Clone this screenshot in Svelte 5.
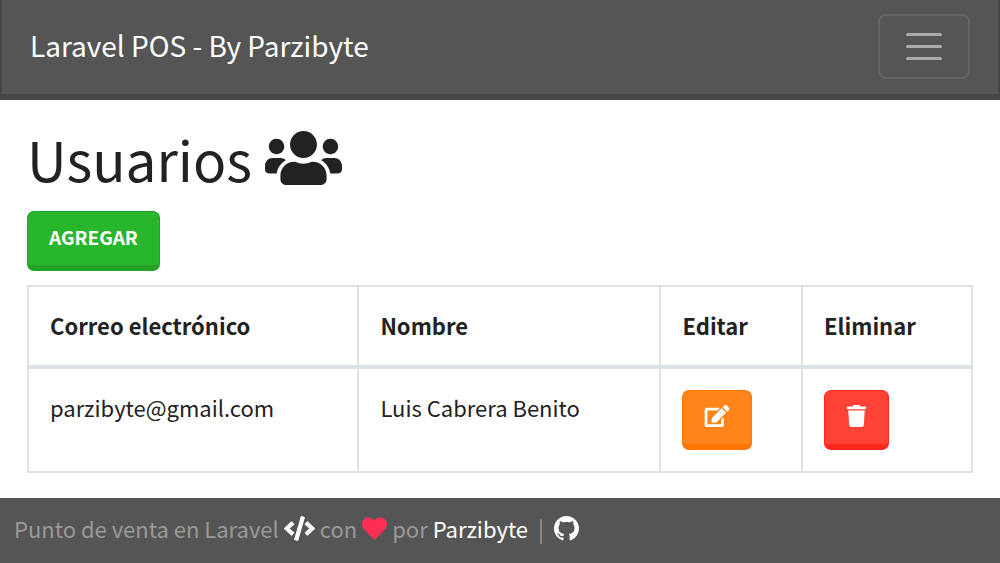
<script>
  let menuOpen = $state(false);

  const users = [
    { email: 'parzibyte@gmail.com', name: 'Luis Cabrera Benito' },
  ];
</script>

<svelte:head>
  <title>Usuarios</title>
</svelte:head>

<div class="page">
  <nav class="navbar">
    <a class="brand" href="#home">Laravel POS - By Parzibyte</a>
    <button
      class="toggler"
      type="button"
      aria-label="Mostrar u ocultar menú"
      aria-expanded={menuOpen}
      onclick={() => (menuOpen = !menuOpen)}
    >
      <svg viewBox="0 0 30 30" aria-hidden="true">
        <path stroke="currentColor" stroke-width="2" stroke-linecap="round" stroke-miterlimit="10" d="M4 7h22M4 15h22M4 23h22" />
      </svg>
    </button>
  </nav>

  <main>
    <h1>
      Usuarios
      <svg class="icon-users" viewBox="0 0 640 512" aria-hidden="true">
        <path d="M96 224c35.3 0 64-28.7 64-64s-28.7-64-64-64-64 28.7-64 64 28.7 64 64 64zm448 0c35.3 0 64-28.7 64-64s-28.7-64-64-64-64 28.7-64 64 28.7 64 64 64zm32 32h-64c-17.6 0-33.5 7.1-45.1 18.6 40.3 22.1 68.9 62 75.1 109.4h66c17.7 0 32-14.3 32-32v-32c0-35.3-28.7-64-64-64zm-256 0c61.9 0 112-50.1 112-112S381.9 32 320 32 208 82.1 208 144s50.1 112 112 112zm76.8 32h-8.3c-20.8 10-43.9 16-68.5 16s-47.6-6-68.5-16h-8.3C179.6 288 128 339.6 128 403.2V432c0 26.5 21.5 48 48 48h288c26.5 0 48-21.5 48-48v-28.8c0-63.6-51.6-115.2-115.2-115.2zm-223.7-13.4C161.5 263.1 145.6 256 128 256H64c-35.3 0-64 28.7-64 64v32c0 17.7 14.3 32 32 32h65.9c6.3-47.4 34.9-87.3 75.2-109.4z" />
      </svg>
    </h1>
    <a class="btn success" href="#agregar">Agregar</a>

    <table>
      <thead>
        <tr>
          <th class="email">Correo electrónico</th>
          <th class="name">Nombre</th>
          <th class="edit">Editar</th>
          <th class="delete">Eliminar</th>
        </tr>
      </thead>
      <tbody>
        {#each users as user}
          <tr>
            <td>{user.email}</td>
            <td>{user.name}</td>
            <td>
              <a class="btn warning" href="#editar" aria-label="Editar">
                <svg class="icon-edit" viewBox="0 0 576 512" aria-hidden="true">
                  <path d="M402.6 83.2l90.2 90.2c3.8 3.8 3.8 10 0 13.8L274.4 405.6l-92.8 10.3c-12.4 1.4-22.9-9.1-21.5-21.5l10.3-92.8L388.8 83.2c3.8-3.8 10-3.8 13.8 0zm162-22.9l-48.8-48.8c-15.2-15.2-39.9-15.2-55.2 0l-35.4 35.4c-3.8 3.8-3.8 10 0 13.8l90.2 90.2c3.8 3.8 10 3.8 13.8 0l35.4-35.4c15.2-15.3 15.2-40 0-55.2zM384 346.2V448H64V128h229.8c3.2 0 6.2-1.3 8.5-3.5l40-40c7.6-7.6 2.2-20.5-8.5-20.5H48C21.5 64 0 85.5 0 112v352c0 26.5 21.5 48 48 48h352c26.5 0 48-21.5 48-48V306.2c0-10.7-12.9-16-20.5-8.5l-40 40c-2.2 2.3-3.5 5.3-3.5 8.5z" />
                </svg>
              </a>
            </td>
            <td>
              <button class="btn danger" type="button" aria-label="Eliminar">
                <svg class="icon-trash" viewBox="0 0 448 512" aria-hidden="true">
                  <path d="M432 32H312l-9.4-18.7A24 24 0 0 0 281.1 0H166.8a23.72 23.72 0 0 0-21.4 13.3L136 32H16A16 16 0 0 0 0 48v32a16 16 0 0 0 16 16h416a16 16 0 0 0 16-16V48a16 16 0 0 0-16-16zM53.2 467a48 48 0 0 0 47.9 45h245.8a48 48 0 0 0 47.9-45L416 128H32z" />
                </svg>
              </button>
            </td>
          </tr>
        {/each}
      </tbody>
    </table>
  </main>

  <footer>
    <span>Punto de venta en Laravel</span>
    <svg class="icon-code" viewBox="0 0 640 512" aria-hidden="true">
      <path d="M278.9 511.5l-61-17.7c-6.4-1.8-10-8.5-8.2-14.9L346.2 8.7c1.8-6.4 8.5-10 14.9-8.2l61 17.7c6.4 1.8 10 8.5 8.2 14.9L293.8 503.3c-1.9 6.4-8.5 10.1-14.9 8.2zm-114-112.2l43.5-46.4c4.6-4.9 4.3-12.7-.8-17.2L117 256l90.6-79.7c5.1-4.5 5.5-12.3.8-17.2l-43.5-46.4c-4.5-4.8-12.1-5.1-17-.5L3.8 247.2c-5.1 4.7-5.1 12.8 0 17.5l144.1 135.1c4.9 4.6 12.5 4.4 17-.5zm327.2.6l144.1-135.1c5.1-4.7 5.1-12.8 0-17.5L492.1 112.1c-4.8-4.5-12.4-4.3-17 .5L431.6 159c-4.6 4.9-4.3 12.7.8 17.2L523 256l-90.6 79.7c-5.1 4.5-5.5 12.3-.8 17.2l43.5 46.4c4.5 4.9 12.1 5.1 17 .6z" />
    </svg>
    <span>con</span>
    <svg class="icon-heart" viewBox="0 0 512 512" aria-hidden="true">
      <path d="M462.3 62.6C407.5 15.9 326 24.3 275.7 76.2L256 96.5l-19.7-20.3C186.1 24.3 104.5 15.9 49.7 62.6c-62.8 53.6-66.1 149.8-9.9 207.9l193.5 199.8c12.5 12.9 32.8 12.9 45.3 0l193.5-199.8c56.3-58.1 53-154.3-9.8-207.9z" />
    </svg>
    <span>por</span>
    <a href="#parzibyte">Parzibyte</a>
    <span class="divider">|</span>
    <a class="github" href="#github" aria-label="GitHub">
      <svg class="icon-github" viewBox="0 0 16 16" aria-hidden="true">
        <path d="M8 0C3.58 0 0 3.58 0 8c0 3.54 2.29 6.53 5.47 7.59.4.07.55-.17.55-.38 0-.19-.01-.82-.01-1.49-2.01.37-2.53-.49-2.69-.94-.09-.23-.48-.94-.82-1.13-.28-.15-.68-.52-.01-.53.63-.01 1.08.58 1.23.82.72 1.21 1.87.87 2.33.66.07-.52.28-.87.51-1.07-1.78-.2-3.64-.89-3.64-3.95 0-.87.31-1.59.82-2.15-.08-.2-.36-1.02.08-2.12 0 0 .67-.21 2.2.82.64-.18 1.32-.27 2-.27.68 0 1.36.09 2 .27 1.53-1.04 2.2-.82 2.2-.82.44 1.1.16 1.92.08 2.12.51.56.82 1.27.82 2.15 0 3.07-1.87 3.75-3.65 3.95.29.25.54.73.54 1.48 0 1.07-.01 1.93-.01 2.2 0 .21.15.46.55.38A8.013 8.013 0 0016 8c0-4.42-3.58-8-8-8z" />
      </svg>
    </a>
  </footer>
</div>

<style>
  :global(body) {
    background: #fff;
  }

  .page {
    display: flex;
    flex-direction: column;
    min-height: 100vh;
    font-family: "Noto Sans CJK SC", "Noto Sans", sans-serif;
    font-size: 22px;
    line-height: 34px;
    color: #222;
  }

  svg {
    fill: currentColor;
  }

  .navbar {
    display: flex;
    align-items: center;
    justify-content: space-between;
    padding: 14px 28px 15px;
    background: #555;
    border: solid #464646;
    border-width: 0 2px 6px;
  }

  .brand {
    padding-bottom: 4px;
    font-size: 28px;
    color: #fff;
    text-decoration: none;
  }

  .toggler {
    display: flex;
    padding: 8px 20px;
    background: transparent;
    border: 2px solid #656565;
    border-radius: 8px;
    color: #aaa;
    cursor: pointer;
  }

  .toggler svg {
    width: 48px;
    height: 45px;
  }

  main {
    padding: 24px 27px 25px;
  }

  h1 {
    display: flex;
    align-items: center;
    gap: 13px;
    margin: 0 0 19px;
    font-size: 55px;
    font-weight: 400;
    line-height: 68px;
  }

  .icon-users {
    width: 77px;
    height: 62px;
  }

  .btn {
    display: inline-flex;
    align-items: center;
    box-sizing: border-box;
    height: 60px;
    padding: 0 21px 4px;
    border: solid;
    border-width: 1px 1px 6px;
    border-radius: 7px;
    color: #fff;
    font-family: inherit;
    font-size: 19px;
    font-weight: 700;
    text-transform: uppercase;
    text-decoration: none;
    vertical-align: top;
    cursor: pointer;
  }

  .success {
    background: #28b62c;
    border-color: #23a127;
  }

  .warning {
    background: #ff851b;
    border-color: #ff7701;
  }

  .danger {
    background: #ff4136;
    border-color: #ff291c;
  }

  .icon-edit {
    width: 26px;
    height: 22px;
  }

  .icon-trash {
    width: 21px;
    height: 22px;
  }

  table {
    width: 100%;
    margin-top: 14px;
    border-collapse: collapse;
  }

  th, td {
    padding: 21px;
    border: 2px solid #dee2e6;
    text-align: left;
    vertical-align: top;
  }

  th {
    padding-bottom: 23px;
    font-weight: 700;
    border-bottom-width: 4px;
  }

  .email {
    width: 35%;
  }

  .name {
    width: 32%;
  }

  .edit {
    width: 15%;
  }

  .delete {
    width: 18%;
  }

  footer {
    display: flex;
    align-items: center;
    gap: 5px;
    margin-top: auto;
    padding: 13px 14px 18px;
    background: #555;
    color: #999;
  }

  footer a {
    color: #fff;
    text-decoration: none;
  }

  .icon-code {
    width: 31px;
    height: 25px;
    color: #fff;
  }

  .icon-heart {
    width: 25px;
    height: 25px;
    color: #ff2e57;
  }

  .divider {
    margin: 0 5px;
  }

  .github {
    display: flex;
  }

  .icon-github {
    width: 25px;
    height: 25px;
  }
</style>
